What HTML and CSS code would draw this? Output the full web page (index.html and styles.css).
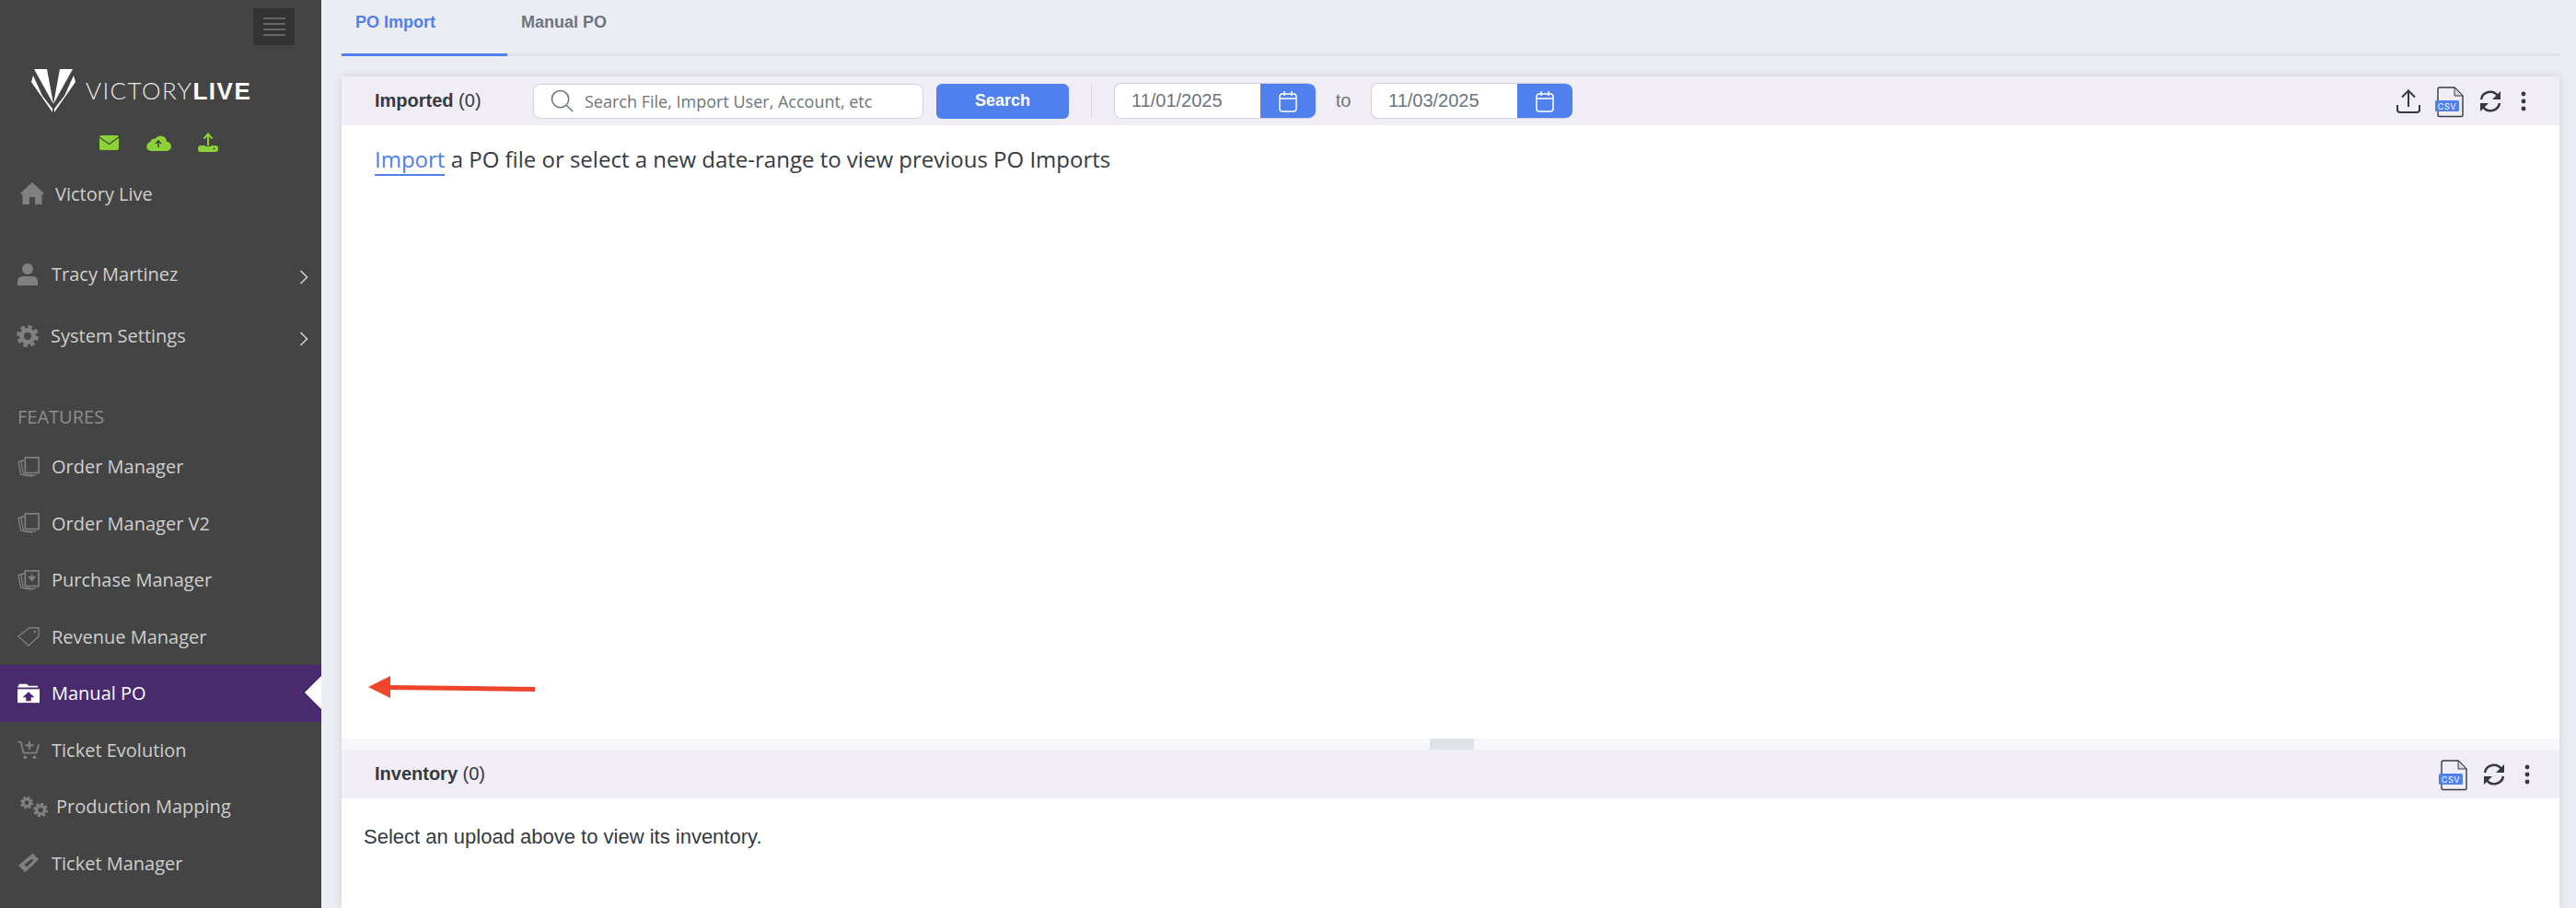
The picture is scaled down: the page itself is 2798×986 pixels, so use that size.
FILE: index.html
```html
<!DOCTYPE html>
<html lang="en">
<head>
    <meta charset="UTF-8">
    <meta name="viewport" content="width=device-width, initial-scale=1.0">
    <title>PO Import</title>
    <link rel="stylesheet" href="styles.css">
</head>
<body>

    <svg class="defs" width="0" height="0">
        <symbol id="gear" viewBox="0 0 24 24">
            <circle cx="12" cy="12" r="6.5" fill="none" stroke="currentColor" stroke-width="5"></circle>
            <circle cx="12" cy="12" r="10" fill="none" stroke="currentColor" stroke-width="4" stroke-dasharray="4.6 3.25"></circle>
        </symbol>
        <symbol id="papers" viewBox="0 0 26 24">
            <path d="M8 4 L1 6 L4 21 L16 23 L22 21" fill="none" stroke="currentColor" stroke-width="1.4"></path>
            <path d="M8 4 L4 6 L7 21 L18 22" fill="none" stroke="currentColor" stroke-width="1.4"></path>
            <rect x="9" y="1" width="16" height="18" fill="none" stroke="currentColor" stroke-width="1.8"></rect>
        </symbol>
        <symbol id="csv" viewBox="0 0 32 36">
            <path d="M3 5 a2 2 0 0 1 2 -2 H21 L30 12 V33 a1.5 1.5 0 0 1 -1.5 1.5 H5 a2 2 0 0 1 -2 -2 Z" fill="none" stroke="#343a40" stroke-width="1.4"></path>
            <path d="M21 3 V12 H30 Z" fill="#d6d7dc" stroke="#343a40" stroke-width="1"></path>
            <rect x="0" y="17" width="26" height="12" rx="1.5" fill="#4f80ee"></rect>
            <text x="13" y="26.5" text-anchor="middle" class="csv-text">CSV</text>
        </symbol>
        <symbol id="sync" viewBox="0 0 24 26">
            <path d="M2 11 A10 10 0 0 1 20 7" fill="none" stroke="currentColor" stroke-width="2.6"></path>
            <path d="M22 15 A10 10 0 0 1 4 19" fill="none" stroke="currentColor" stroke-width="2.6"></path>
            <path d="M23 2 V11 H14 Z M1 24 V15 H10 Z" fill="currentColor"></path>
        </symbol>
        <symbol id="dots" viewBox="0 0 8 22">
            <circle cx="4" cy="3" r="2.4" fill="currentColor"></circle>
            <circle cx="4" cy="11" r="2.4" fill="currentColor"></circle>
            <circle cx="4" cy="19" r="2.4" fill="currentColor"></circle>
        </symbol>
        <symbol id="calendar" viewBox="0 0 20 24">
            <rect x="1" y="4" width="18" height="19" rx="3" fill="none" stroke="currentColor" stroke-width="1.5"></rect>
            <path d="M1 9 H19 M6 1 V6 M14 1 V6" fill="none" stroke="currentColor" stroke-width="1.5"></path>
        </symbol>
    </svg>

    <aside class="sidebar">
        <div class="menu-row">
            <div class="menu-btn">
                <span></span><span></span><span></span><span></span>
            </div>
        </div>

        <div class="logo">
            <svg class="logo-mark" viewBox="34 75 48 47">
                <path d="M37 75 H51 L58 113 Z M79 75 H65 L58 113 Z M34 89 L36 82 L46 104 L57 118 L57 122 Z M82 89 L80 82 L70 104 L59 118 L59 122 Z" fill="#fff"></path>
            </svg>
            <span class="logo-text">VICTORY<b>LIVE</b></span>
        </div>

        <div class="quick-links">
            <svg class="quick-mail" viewBox="0 0 21 16">
                <rect width="21" height="16" rx="2" fill="#8cd136"></rect>
                <path d="M0 2 L10.5 9.5 L21 2" fill="none" stroke="#444" stroke-width="1.2"></path>
            </svg>
            <svg class="quick-cloud" viewBox="0 0 27 19">
                <path d="M5 19 a5 5 0 0 1 -1 -9.8 a5 5 0 0 1 6 -3.6 a6.5 6.5 0 0 1 12 3.4 a5 5 0 0 1 0 10 Z" fill="#8cd136"></path>
                <path d="M13 15 V8 M10 11 L13 8 L16 11" fill="none" stroke="#444" stroke-width="1.6"></path>
            </svg>
            <svg class="quick-upload" viewBox="0 0 22 21">
                <path d="M11 15 V2 M6.5 6.5 L11 1.5 L15.5 6.5" fill="none" stroke="#8cd136" stroke-width="2"></path>
                <rect y="14" width="22" height="7" rx="3" fill="#8cd136"></rect>
                <circle cx="17.5" cy="17.5" r="1" fill="#444"></circle>
                <path d="M8 14.5 H14" stroke="#444" stroke-width="1"></path>
            </svg>
        </div>

        <nav class="top-nav">
            <a class="nav-item home">
                <svg class="icon home-icon" viewBox="0 0 26 24"><path d="M13 0 L26 12 L23.5 13.5 V24 H16 V16 H10 V24 H2.5 V13.5 L0 12 Z" fill="currentColor"></path></svg>
                Victory Live
            </a>
            <a class="nav-item tall user">
                <svg class="icon user-icon" viewBox="0 0 22 24"><circle cx="11" cy="6" r="6" fill="currentColor"></circle><path d="M0 24 V20 Q0 14 6 14 H16 Q22 14 22 20 V24 Z" fill="currentColor"></path></svg>
                Tracy Martinez
                <svg class="chevron" viewBox="0 0 10 16"><path d="M1.5 1 L8.5 8 L1.5 15" fill="none" stroke="currentColor" stroke-width="1.6"></path></svg>
            </a>
            <a class="nav-item tall">
                <svg class="icon"><use href="#gear"></use></svg>
                System Settings
                <svg class="chevron" viewBox="0 0 10 16"><path d="M1.5 1 L8.5 8 L1.5 15" fill="none" stroke="currentColor" stroke-width="1.6"></path></svg>
            </a>
        </nav>

        <div class="nav-label">FEATURES</div>

        <nav>
            <a class="nav-item"><svg class="icon"><use href="#papers"></use></svg>Order Manager</a>
            <a class="nav-item"><svg class="icon"><use href="#papers"></use></svg>Order Manager V2</a>
            <a class="nav-item">
                <svg class="icon" viewBox="0 0 26 24">
                    <use href="#papers" width="26" height="24"></use>
                    <path d="M17 4 V10 M13 8 H21 L17 13 Z" stroke="currentColor" fill="currentColor"></path>
                </svg>
                Purchase Manager
            </a>
            <a class="nav-item">
                <svg class="icon" viewBox="0 0 26 24"><path d="M14 2 H25 V12 L13 23 L1 12 Z" fill="none" stroke="currentColor" stroke-width="1.4"></path><circle cx="20.5" cy="6.5" r="1.5" fill="currentColor"></circle></svg>
                Revenue Manager
            </a>
            <a class="nav-item active">
                <svg class="icon" viewBox="0 0 26 22">
                    <path d="M2 0 H11 L13 2 H24 V4 H0 Z" fill="#fff"></path>
                    <rect y="6" width="26" height="16" fill="#fff"></rect>
                    <path d="M13 9 L20 15.5 H16 V20 H10 V15.5 H6 Z" fill="#4a2a6e"></path>
                </svg>
                Manual PO
            </a>
            <a class="nav-item">
                <svg class="icon" viewBox="0 0 26 24">
                    <path d="M0 3 H4 L7 16 H22 L25 6" fill="none" stroke="currentColor" stroke-width="2"></path>
                    <path d="M14 2 V12 M9 7 H19" stroke="currentColor" stroke-width="2.2"></path>
                    <circle cx="9" cy="21" r="2" fill="currentColor"></circle>
                    <circle cx="20" cy="21" r="2" fill="currentColor"></circle>
                </svg>
                Ticket Evolution
            </a>
            <a class="nav-item production">
                <svg class="icon gears-icon" viewBox="0 0 34 26">
                    <use href="#gear" width="16" height="16"></use>
                    <use href="#gear" x="16" y="8" width="18" height="18"></use>
                </svg>
                Production Mapping
            </a>
            <a class="nav-item">
                <svg class="icon" viewBox="0 0 26 24">
                    <path d="M1 15 L18 1 L25 8 L9 23 Z" fill="currentColor"></path>
                    <path d="M8 14 L17 7 L19 9 L11 17 Z" fill="#444"></path>
                </svg>
                Ticket Manager
            </a>
            <a class="nav-item">
                <svg class="icon" viewBox="0 0 26 24"><circle cx="13" cy="12" r="12" fill="currentColor"></circle></svg>
                Season Seat Manager
            </a>
        </nav>
    </aside>

    <main class="content">
        <div class="tabs">
            <a class="tab selected">PO Import</a>
            <a class="tab">Manual PO</a>
        </div>

        <section class="panel">
            <header class="panel-head">
                <div class="panel-title"><b>Imported</b> (0)</div>

                <div class="search-box">
                    <svg class="search-icon" viewBox="0 0 26 26">
                        <circle cx="11" cy="11" r="9.5" fill="none" stroke="currentColor" stroke-width="1.6"></circle>
                        <path d="M18 18 L25 25" stroke="currentColor" stroke-width="1.6"></path>
                    </svg>
                    <span>Search File, Import User, Account, etc</span>
                </div>
                <button class="search-btn">Search</button>

                <div class="divider"></div>

                <div class="date-box">
                    <span class="date-value">11/01/2025</span>
                    <span class="date-btn"><svg class="calendar"><use href="#calendar"></use></svg></span>
                </div>
                <span class="date-to">to</span>
                <div class="date-box">
                    <span class="date-value">11/03/2025</span>
                    <span class="date-btn"><svg class="calendar"><use href="#calendar"></use></svg></span>
                </div>

                <div class="tools">
                    <svg class="tool-upload" viewBox="0 0 26 26">
                        <path d="M13 19 V2 M6 8.5 L13 1.5 L20 8.5" fill="none" stroke="currentColor" stroke-width="2"></path>
                        <path d="M1 17 V22 a3 3 0 0 0 3 3 H22 a3 3 0 0 0 3 -3 V17" fill="none" stroke="currentColor" stroke-width="2"></path>
                    </svg>
                    <svg class="tool-csv"><use href="#csv"></use></svg>
                    <svg class="tool-sync"><use href="#sync"></use></svg>
                    <svg class="tool-dots"><use href="#dots"></use></svg>
                </div>
            </header>

            <div class="panel-body">
                <a class="import-link">Import</a> a PO file or select a new date-range to view previous PO Imports
            </div>

            <div class="splitter"><span class="handle"></span></div>

            <header class="panel-head inventory-head">
                <div class="panel-title"><b>Inventory</b> (0)</div>
                <div class="tools">
                    <svg class="tool-csv"><use href="#csv"></use></svg>
                    <svg class="tool-sync"><use href="#sync"></use></svg>
                    <svg class="tool-dots"><use href="#dots"></use></svg>
                </div>
            </header>

            <div class="inventory-body">Select an upload above to view its inventory.</div>
        </section>

        <!-- Red annotation arrow drawn over the page -->
        <svg class="arrow" viewBox="0 0 181 24">
            <path d="M0 12 L24 0 V10 L181 12 V17 L24 15 V24 Z" fill="#f0452a"></path>
        </svg>
    </main>

</body>
</html>
```

FILE: styles.css
```css
* {
    margin: 0;
    padding: 0;
    box-sizing: border-box;
}

html, body {
    height: 100%;
    overflow: hidden;
}

body {
    display: flex;
    font-family: 'Liberation Sans', Arial, sans-serif;
    background-color: #ecedf2;
    color: #343a40;
}

.defs {
    position: absolute;
}

/* Sidebar */
.sidebar {
    width: 349px;
    flex-shrink: 0;
    height: 986px;
    overflow: hidden;
    background-color: #444444;
    font-family: 'Open Sans', sans-serif;
    color: #cfcfcf;
}

.menu-row {
    display: flex;
    justify-content: flex-end;
    padding: 9px 29px 0 0;
}

.menu-btn {
    width: 45px;
    height: 40px;
    background-color: #333333;
    display: flex;
    flex-direction: column;
    align-items: center;
    justify-content: center;
    gap: 4px;
}

.menu-btn span {
    width: 24px;
    height: 2px;
    background-color: #666666;
}

.logo {
    display: flex;
    align-items: center;
    margin: 26px 0 0 34px;
    height: 47px;
}

.logo-mark {
    width: 48px;
    height: 47px;
    flex-shrink: 0;
}

.logo-text {
    margin-left: 11px;
    font-family: Lato, sans-serif;
    font-weight: 300;
    font-size: 26px;
    line-height: 30px;
    letter-spacing: 1.4px;
    color: #e8e8e8;
}

.logo-text b {
    font-family: 'Liberation Sans', sans-serif;
    font-weight: 700;
    color: #ffffff;
    letter-spacing: 1.5px;
}

.quick-links {
    display: flex;
    align-items: center;
    margin: 22px 0 0 108px;
}

.quick-mail {
    width: 21px;
    height: 16px;
}

.quick-cloud {
    width: 27px;
    height: 19px;
    margin-left: 30px;
}

.quick-upload {
    width: 22px;
    height: 21px;
    margin-left: 29px;
}

.top-nav {
    margin-top: 21px;
    height: 246px;
}

.nav-item {
    position: relative;
    display: flex;
    align-items: center;
    height: 61.5px;
    padding-left: 19px;
    font-size: 20px;
    color: #cfcfcf;
}

.nav-item .icon {
    width: 24px;
    height: 24px;
    margin-right: 13px;
    flex-shrink: 0;
    color: #808080;
}

.nav-item.home {
    padding-left: 22px;
    height: 48px;
    margin-bottom: 30px;
}

.nav-item.tall {
    height: 67px;
    padding-left: 18px;
}

.nav-item .home-icon {
    width: 26px;
    margin-right: 12px;
}

.nav-item .user-icon {
    margin-right: 14px;
}

.chevron {
    position: absolute;
    left: 325px;
    top: 29px;
    width: 10px;
    height: 16px;
    color: #cfcfcf;
}

.nav-label {
    height: 44px;
    padding: 7px 0 0 19px;
    font-size: 20px;
    line-height: 28px;
    color: #8d8d8d;
}

.nav-item.active {
    background-color: #4a2a6e;
    color: #ffffff;
}

.nav-item.active::after {
    content: '';
    position: absolute;
    right: 0;
    top: 12px;
    border-top: 18px solid transparent;
    border-bottom: 18px solid transparent;
    border-right: 18px solid #ffffff;
}

.nav-item.production {
    padding-left: 22px;
}

.nav-item .gears-icon {
    width: 30px;
    margin-right: 9px;
}

/* Main area */
.content {
    position: relative;
    flex: 1;
    padding: 0 18px 0 22px;
    min-width: 0;
}

.tabs {
    display: flex;
    height: 61px;
    border-bottom: 3px solid #dfe1e6;
}

.tab {
    width: 180px;
    height: 61px;
    padding: 13px 0 0 15px;
    font-size: 18px;
    line-height: 22px;
    font-weight: 700;
    color: #6c757d;
}

.tab.selected {
    color: #4f80ee;
    border-bottom: 3px solid #4f80ee;
}

.panel {
    margin-top: 22px;
    height: 903px;
    background-color: #ffffff;
    box-shadow: 0 0 10px rgba(0, 0, 0, 0.12);
}

.panel-head {
    display: flex;
    align-items: center;
    height: 53px;
    padding-left: 36px;
    background-color: #f0edf7;
}

.panel-title {
    width: 172px;
    font-size: 20px;
    color: #343a40;
}

.search-box {
    display: flex;
    align-items: center;
    width: 424px;
    height: 38px;
    padding-left: 18px;
    background-color: #ffffff;
    border: 1px solid #ced4da;
    border-radius: 8px;
    font-family: 'Open Sans', sans-serif;
    font-size: 18px;
    color: #6c757d;
}

.search-icon {
    width: 25px;
    height: 25px;
    margin-right: 12px;
    color: #6c757d;
}

.search-btn {
    width: 144px;
    height: 38px;
    margin-left: 14px;
    border: none;
    border-radius: 6px;
    background-color: #4f80ee;
    color: #ffffff;
    font-family: 'Liberation Sans', sans-serif;
    font-size: 18px;
    font-weight: 700;
}

.divider {
    width: 1px;
    height: 36px;
    margin: 0 24px;
    background-color: #d8d9de;
}

.date-box {
    display: flex;
    width: 219px;
    height: 39px;
    background-color: #ffffff;
    border: 1px solid #ced4da;
    border-right: none;
    border-radius: 8px;
    overflow: hidden;
}

.date-value {
    flex: 1;
    padding-left: 18px;
    font-size: 20px;
    line-height: 37px;
    color: #6c757d;
}

.date-btn {
    display: flex;
    align-items: center;
    justify-content: center;
    width: 60px;
    background-color: #4f80ee;
    color: #ffffff;
}

.calendar {
    width: 20px;
    height: 24px;
}

.date-to {
    width: 60px;
    text-align: center;
    font-size: 20px;
    color: #6c757d;
}

.tools {
    display: flex;
    align-items: center;
    margin-left: auto;
    color: #343a40;
}

.tool-upload {
    width: 26px;
    height: 26px;
    margin-right: 16px;
}

.tool-csv {
    width: 32px;
    height: 36px;
    margin-right: 16px;
}

.tool-sync {
    width: 24px;
    height: 26px;
    margin-right: 20px;
}

.tool-dots {
    width: 8px;
    height: 22px;
    margin-right: 35px;
}

.inventory-head .tool-dots {
    margin-right: 31px;
}

.csv-text {
    font-family: Inter, sans-serif;
    font-size: 9px;
    letter-spacing: 0.6px;
    fill: #ffffff;
}

.panel-body {
    height: 666px;
    padding: 20px 36px;
    font-family: 'Open Sans', sans-serif;
    font-size: 24px;
    line-height: 34px;
    color: #343a40;
}

.import-link {
    color: #4f80ee;
    border-bottom: 2px solid #4f80ee;
}

.splitter {
    display: flex;
    justify-content: center;
    height: 12px;
    background-color: #f7f8fa;
    padding-left: 2px;
}

.handle {
    width: 48px;
    height: 12px;
    background-color: #dee2e6;
}

.inventory-body {
    padding: 29px 24px;
    font-size: 22px;
    line-height: 26px;
    color: #343a40;
}

.arrow {
    position: absolute;
    left: 51px;
    top: 734px;
    width: 181px;
    height: 24px;
}
```
